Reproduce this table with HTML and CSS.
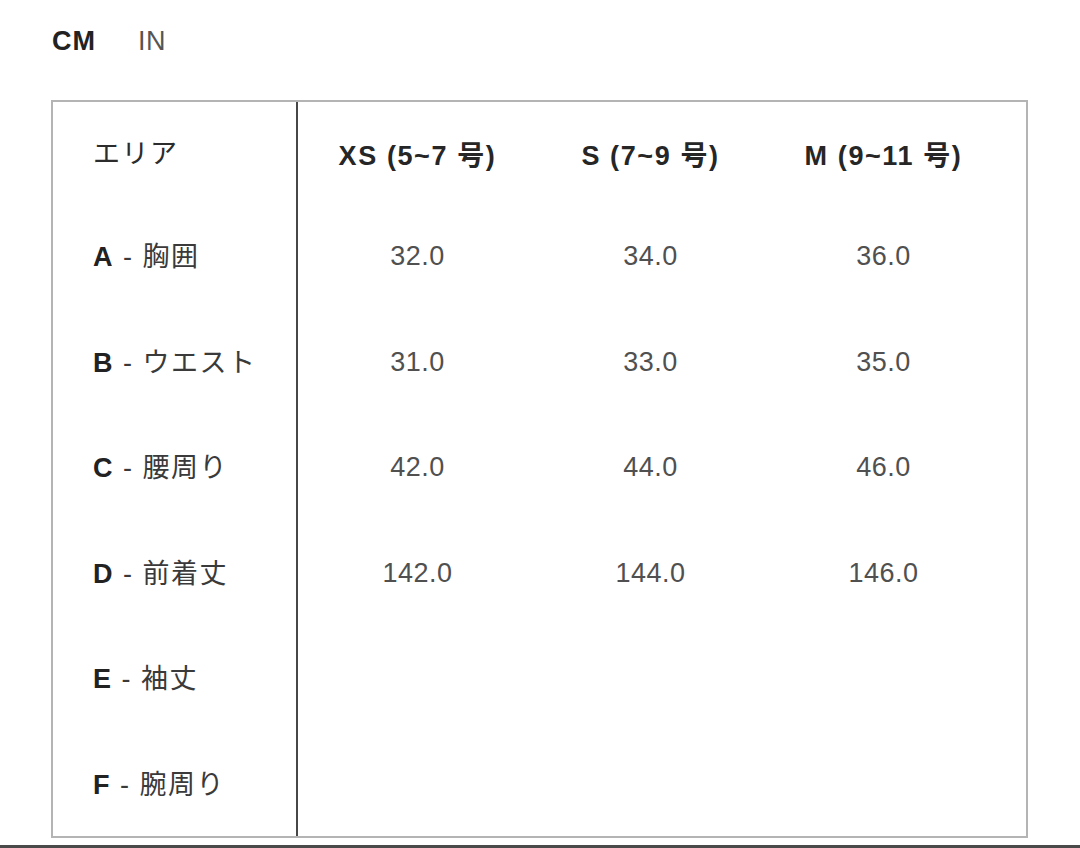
FILE: index.html
```html
<!DOCTYPE html>
<html lang="ja">
<head>
<meta charset="utf-8">
<link rel="stylesheet" href="styles.css">
</head>
<body>
<div class="page">
  <div class="units">
    <span class="unit active">CM</span>
    <span class="unit">IN</span>
  </div>
  <div class="chart">
    <div class="labels">
      <div class="cell head"><span>エリア</span></div>
      <div class="cell"><span><b>A</b> - 胸囲</span></div>
      <div class="cell"><span><b>B</b> - ウエスト</span></div>
      <div class="cell"><span><b>C</b> - 腰周り</span></div>
      <div class="cell"><span><b>D</b> - 前着丈</span></div>
      <div class="cell"><span><b>E</b> - 袖丈</span></div>
      <div class="cell"><span><b>F</b> - 腕周り</span></div>
    </div>
    <div class="sizes">
      <div class="cell head">XS (5~7 号)</div>
      <div class="cell head">S (7~9 号)</div>
      <div class="cell head">M (9~11 号)</div>
      <div class="cell num">32.0</div>
      <div class="cell num">34.0</div>
      <div class="cell num">36.0</div>
      <div class="cell num">31.0</div>
      <div class="cell num">33.0</div>
      <div class="cell num">35.0</div>
      <div class="cell num">42.0</div>
      <div class="cell num">44.0</div>
      <div class="cell num">46.0</div>
      <div class="cell num">142.0</div>
      <div class="cell num">144.0</div>
      <div class="cell num">146.0</div>
      <div class="cell num"></div>
      <div class="cell num"></div>
      <div class="cell num"></div>
      <div class="cell num"></div>
      <div class="cell num"></div>
      <div class="cell num"></div>
    </div>
  </div>
</div>
<div class="bottom-bar"></div>
</body>
</html>
```
FILE: styles.css
```css
html, body {
  margin: 0;
  padding: 0;
  background: #fff;
}
body {
  width: 1080px;
  height: 848px;
  overflow: hidden;
  font-family: "Liberation Sans", Arial, "Noto Sans CJK JP", sans-serif;
  color: #2a2a2a;
}
.page {
  padding: 24px 0 0 51px;
  height: 814px;
  box-sizing: border-box;
}
.units {
  display: flex;
  gap: 42px;
  padding-left: 1px;
  height: 34px;
  align-items: center;
  margin-bottom: 42px;
  font-size: 27px;
}
.unit {
  color: #555;
  letter-spacing: 0.5px;
}
.unit.active {
  font-weight: bold;
  color: #222;
  letter-spacing: 1px;
}
.chart {
  display: flex;
  width: 977px;
  height: 738px;
  box-sizing: border-box;
  border: 2px solid #b4b4b4;
  font-size: 27px;
}
.labels {
  width: 245px;
  box-sizing: border-box;
  border-right: 2px solid #474747;
  display: grid;
  grid-template-rows: 102px repeat(6, 105.5px);
}
.labels .cell {
  display: flex;
  align-items: center;
  padding-left: 40px;
  padding-bottom: 4px;
  color: #3a3a3a;
  letter-spacing: 1.5px;
}
.labels .cell b {
  color: #222;
}
.labels .head {
  color: #2c2c2c;
}
.sizes {
  flex: 1;
  display: grid;
  grid-template-columns: repeat(3, 233px);
  grid-template-rows: 102px repeat(6, 105.5px);
  padding-left: 3px;
}
.sizes .cell {
  display: flex;
  align-items: center;
  justify-content: center;
}
.sizes .head {
  font-weight: bold;
  color: #262626;
  letter-spacing: 1.6px;
}
.sizes .num {
  color: #505050;
  letter-spacing: 0.5px;
}
.bottom-bar {
  margin-top: 31px;
  height: 3px;
  background: #4a4a4a;
}
```
